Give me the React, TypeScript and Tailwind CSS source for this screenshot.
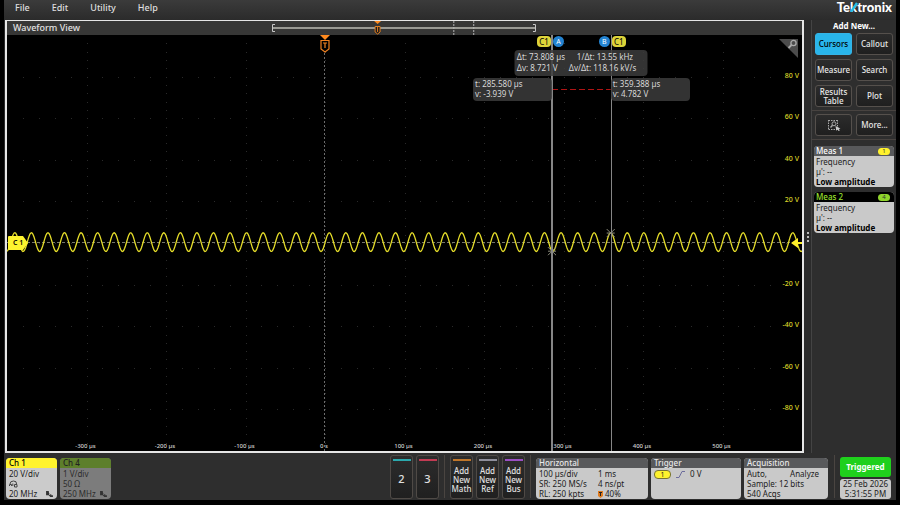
import type { ReactNode } from 'react';
import clsx from 'clsx';

const T_MIN = -400;
const T_SPAN = 1000;
const V_MAX = 100;
const V_SPAN = 200;

const PLOT_W = 795;
const PLOT_H = 416;

const CURSOR_A = { t: 285.58, v: -3.939 };
const CURSOR_B = { t: 359.388, v: 4.782 };

const timeTicks = [-300, -200, -100, 0, 100, 200, 300, 400, 500];
const voltTicks = [80, 60, 40, 20, 0, -20, -40, -60, -80];

const px = (t: number) => ((t - T_MIN) / T_SPAN) * PLOT_W;
const py = (v: number) => ((V_MAX - v) / V_SPAN) * PLOT_H;
const left = (t: number) => `${((t - T_MIN) / T_SPAN) * 100}%`;
const top = (v: number) => `${((V_MAX - v) / V_SPAN) * 100}%`;

/** Sine trace that peaks at cursor B. */
function buildTrace() {
  const period = 20.82;
  const points: string[] = [];
  for (let t = T_MIN; t <= T_MIN + T_SPAN; t += 1) {
    const v = 0.42 + 4.5 * Math.cos((2 * Math.PI * (t - CURSOR_B.t)) / period);
    points.push(`${px(t).toFixed(2)},${py(v).toFixed(2)}`);
  }
  return points.join(' ');
}

const trace = buildTrace();

function GridDots() {
  const dots: ReactNode[] = [];
  for (const t of timeTicks) {
    for (let i = 1; i < 50; i++) {
      dots.push(<rect key={`v${t}-${i}`} x={Math.round(px(t))} y={Math.round((i * PLOT_H) / 50)} width="1" height="1" />);
    }
  }
  for (const v of voltTicks) {
    for (let i = 1; i < 50; i++) {
      dots.push(<rect key={`h${v}-${i}`} x={Math.round((i * PLOT_W) / 50)} y={Math.round(py(v))} width="1" height="1" />);
    }
  }
  return <g fill="#2a2a2a">{dots}</g>;
}

function CursorMark({ t, v }: { t: number; v: number }) {
  const x = px(t);
  const y = py(v);
  return (
    <path
      d={`M${x - 4} ${y - 4}L${x + 4} ${y + 4}M${x + 4} ${y - 4}L${x - 4} ${y + 4}M${x - 4} ${y}H${x + 4}`}
      stroke="#8c8c7c"
      strokeWidth="1"
    />
  );
}

function TriggerMarker({ className }: { className?: string }) {
  return (
    <svg viewBox="0 0 10 18" className={className} fill="none" aria-hidden="true">
      <path d="M0 0H10L5 5Z" fill="#ff8a1e" />
      <path d="M1 5.5H9V14L5 17L1 14Z" fill="#000" stroke="#f08020" strokeWidth="1.2" />
      <path d="M3 8H7M5 8V13" stroke="#f08020" strokeWidth="1.2" />
    </svg>
  );
}

function Overview() {
  return (
    <svg viewBox="0 0 266 14" preserveAspectRatio="none" className="absolute left-1/3 top-0 h-full w-1/3" fill="none" aria-hidden="true">
      <path d="M3 3.5H0.5V10.5H3M262 3.5H264.5V10.5H262" stroke="#c8c8c8" />
      <path d="M1 7H264" stroke="#9a9a94" strokeWidth="2" />
      <path d="M182.5 0V14M202.5 0V14" stroke="#b5b5b5" strokeDasharray="2 1" />
      <path d="M102.5 0H109.5L106 3Z" fill="#ff8a1e" />
      <path d="M103.5 5.5H108.5V11L106 13L103.5 11Z" fill="#1a1a1a" stroke="#e07c20" />
      <path d="M106 6V11" stroke="#e07c20" />
    </svg>
  );
}

function SourceTag() {
  return <span className="h-[11px] w-[14px] rounded-sm bg-[#ddd43a] text-center text-[8px] leading-[11px] text-black">C1</span>;
}

function CursorTag({ name }: { name: string }) {
  return <span className="size-[11px] rounded-full bg-[#2383d1] text-center text-[7px] leading-[11px] text-white">{name}</span>;
}

const readout = 'absolute rounded-sm bg-[#3c3c3c]/85 px-[2px] text-[8px] text-[#d8d8d8] whitespace-nowrap';

function Plot() {
  return (
    <div className="relative min-h-[416px] flex-1 overflow-hidden bg-black">
      <svg
        viewBox={`0 0 ${PLOT_W} ${PLOT_H}`}
        preserveAspectRatio="none"
        className="absolute inset-0 size-full"
        fill="none"
        role="img"
        aria-label="Channel 1"
      >
        <GridDots />
        <path d={`M0 ${py(0) - 0.5}H${PLOT_W}`} stroke="#77776c" strokeDasharray="3 2" strokeWidth="1" />
        <path d={`M${Math.floor(px(0)) - 0.5} 18V${PLOT_H}`} stroke="#6c6c6c" strokeDasharray="2 2" />
        <polyline points={trace} stroke="#e6de2a" strokeWidth="1.3" />
        <path d={`M${px(CURSOR_A.t)} 54.5H${px(CURSOR_B.t)}`} stroke="#b01414" strokeDasharray="6 3" />
        <CursorMark {...CURSOR_A} />
        <CursorMark {...CURSOR_B} />
      </svg>

      <div className="absolute inset-y-0 w-[2px] -translate-x-1/2 bg-[#868686]" style={{ left: left(CURSOR_A.t) }} />
      <div className="absolute inset-y-0 w-px bg-[#868686]" style={{ left: left(CURSOR_B.t) }} />

      <TriggerMarker className="absolute top-0 left-[40%] h-[18px] w-[10px] -translate-x-1/2" />

      <div className={clsx(readout, 'top-[43px] h-[23px] w-[79px] -translate-x-full pt-px leading-[10px]')} style={{ left: left(CURSOR_A.t) }}>
        <p>t: 285.580 µs</p>
        <p>v: -3.939 V</p>
      </div>
      <div className={clsx(readout, 'top-[43px] h-[23px] w-[79px] pt-px leading-[10px]')} style={{ left: left(CURSOR_B.t) }}>
        <p>t: 359.388 µs</p>
        <p>v: 4.782 V</p>
      </div>
      <div
        className={clsx(readout, 'top-[15px] grid h-[26px] w-[133px] -translate-x-1/2 grid-cols-[48px_1fr] content-start gap-x-1 pt-px leading-[11px]')}
        style={{ left: left((CURSOR_A.t + CURSOR_B.t) / 2) }}
      >
        <span>Δt: 73.808 µs</span>
        <span className="pl-2">1/Δt: 13.55 kHz</span>
        <span>Δv: 8.721 V</span>
        <span>Δv/Δt: 118.16 kV/s</span>
      </div>

      <div className="absolute top-px flex w-[30px] -translate-x-1/2 justify-between pr-[3px]" style={{ left: left(CURSOR_A.t) }}>
        <SourceTag />
        <CursorTag name="A" />
      </div>
      <div className="absolute top-px flex w-[30px] -translate-x-1/2 justify-between pl-[3px]" style={{ left: left(CURSOR_B.t) }}>
        <CursorTag name="B" />
        <SourceTag />
      </div>

      <svg viewBox="0 0 19 19" className="absolute top-1 right-1 size-[19px]" fill="none" aria-hidden="true">
        <path d="M0 0H19V19Z" fill="#4c4c4c" />
        <circle cx="14.5" cy="4" r="2.6" stroke="#aaa" strokeWidth="1.3" />
        <path d="M12.5 6L9.5 9" stroke="#aaa" strokeWidth="1.8" />
      </svg>

      {timeTicks.map((t) => (
        <span
          key={t}
          className="absolute bottom-px -translate-x-1/2 pr-[2px] text-[6px] leading-[8px] font-medium whitespace-nowrap text-[#cfcfcf]"
          style={{ left: left(t) }}
        >
          {t === 0 ? '0 s' : `${t} µs`}
        </span>
      ))}

      {voltTicks
        .filter((v) => v !== 0)
        .map((v) => (
          <span key={v} className="absolute right-[3px] -translate-y-1/2 pb-[2px] text-[7px] leading-[8px] font-medium text-[#ddd628]" style={{ top: top(v) }}>
            {v} V
          </span>
        ))}

      <svg viewBox="0 0 12 10" className="absolute right-0 h-[10px] w-[12px] -translate-y-1/2" style={{ top: top(0) }} aria-hidden="true">
        <path d="M1 5L8 0V4H12V6H8V10Z" fill="#fff02a" />
      </svg>
      <div className="absolute left-[1px] flex h-[14px] -translate-y-1/2 items-center" style={{ top: top(0) }}>
        <svg viewBox="0 0 20 14" className="absolute inset-0 h-[14px] w-[20px]" aria-hidden="true">
          <path d="M1 0H15L20 7L15 14H1Q0 14 0 13V1Q0 0 1 0Z" fill="#fdf32f" />
        </svg>
        <span className="relative pl-[5px] text-[7px] font-semibold text-black">C 1</span>
      </div>
    </div>
  );
}

function PanelButton({ children, active, label }: { children: ReactNode; active?: boolean; label?: string }) {
  return (
    <button
      type="button"
      aria-label={label}
      className={clsx(
        'flex h-[22px] items-center justify-center rounded-[3px] border pb-px text-center text-[8px] leading-[9px] font-medium',
        active ? 'border-[#35b4e6] bg-[#29b5ea] text-black' : 'border-[#55504c] bg-linear-to-b from-[#2c2c2c] to-[#1f1f1f] text-[#e8e8e8]',
      )}
    >
      {children}
    </button>
  );
}

function Measurement({ name, channel, green }: { name: string; channel: number; green?: boolean }) {
  return (
    <section className="overflow-hidden rounded-sm bg-[#c9c9c9] text-[8px] leading-[10px] text-[#222]">
      <header className={clsx('flex h-[10px] items-center justify-between pr-1 pl-[2px]', green ? 'bg-black text-[#9be02e]' : 'bg-[#58595b] text-white')}>
        <h2 className="font-medium">{name}</h2>
        <span className={clsx('h-[7px] w-3 rounded-sm text-center text-[6px] leading-[7px] text-[#333]', green ? 'bg-[#8fd42c]' : 'bg-[#fff22d]')}>
          {channel}
        </span>
      </header>
      <div className="px-[2px] pt-px">
        <p>Frequency</p>
        <p>µ': --</p>
        <p className="font-bold text-black">Low amplitude</p>
      </div>
    </section>
  );
}

function Sidebar() {
  return (
    <aside className="w-[85px] shrink-0 border-l border-[#444] bg-[#2e2e2e]">
      <h1 className="text-center text-[8px] leading-[11px] font-bold text-white">Add New...</h1>
      <div className="grid grid-cols-2 gap-1 px-[3px] pt-[2px]">
        <PanelButton active>Cursors</PanelButton>
        <PanelButton>Callout</PanelButton>
        <PanelButton>Measure</PanelButton>
        <PanelButton>Search</PanelButton>
        <PanelButton>
          Results
          <br />
          Table
        </PanelButton>
        <PanelButton>Plot</PanelButton>
      </div>
      <div className="mt-[3px] grid grid-cols-2 gap-x-1 border-y border-[#484340] px-[3px] py-[3px]">
        <PanelButton label="Draw a box">
          <svg viewBox="0 0 14 12" className="h-3 w-[14px]" fill="none" stroke="#aaa" aria-hidden="true">
            <path d="M1.5 1.5H11M1.5 10.5H11M1.5 1V11M10.5 1V8" strokeDasharray="1.5 1" />
            <circle cx="7" cy="4.8" r="2" />
            <path d="M5.5 6.3L3.5 8.5" strokeWidth="1.4" />
            <path d="M8.5 7L13.5 9.5L11.8 10L12.8 11.5L11.6 12L10.6 10.6L9.3 11.8Z" fill="#ccc" stroke="none" />
          </svg>
        </PanelButton>
        <PanelButton>More...</PanelButton>
      </div>
      <div className="flex flex-col gap-[5px] px-[2px] pt-[6px]">
        <Measurement name="Meas 1" channel={1} />
        <Measurement name="Meas 2" channel={4} green />
      </div>
    </aside>
  );
}

function BandwidthIcon() {
  return (
    <svg viewBox="0 0 8 7" className="h-[6px] w-[7px]" aria-hidden="true">
      <path d="M0 0H2.5Q4 .3 3.3 1.9Q4.6 2.8 3.4 4L5 5V3.5H6V5H8V7H5L3 5H0Z" fill="#333" />
    </svg>
  );
}

interface ChannelProps {
  name: string;
  scale: string;
  termination: ReactNode;
  bandwidth: string;
  dim?: boolean;
}

function Channel({ name, scale, termination, bandwidth, dim }: ChannelProps) {
  return (
    <section className={clsx('h-[41px] w-[51px] overflow-hidden rounded-sm text-[8px]', dim ? 'bg-[#7c7c7c] text-[#2c2c2c]' : 'bg-[#cbcbcb] text-[#222]')}>
      <h2 className={clsx('h-[10px] pl-[3px] leading-[10px] font-medium', dim ? 'bg-[#5d7f2b] text-[#222]' : 'bg-[#fff32d] text-black')}>{name}</h2>
      <div className="pt-px pr-1 pl-[3px] leading-[10px]">
        <p>{scale}</p>
        <p className="flex h-[10px] items-center">{termination}</p>
        <p className="flex items-center justify-between">
          {bandwidth}
          <BandwidthIcon />
        </p>
      </div>
    </section>
  );
}

function AddButton({ color, children, large }: { color: string; children: ReactNode; large?: boolean }) {
  return (
    <button
      type="button"
      className={clsx(
        'flex h-[44px] w-[23px] flex-col items-center rounded-[3px] border border-[#4f4a46] bg-linear-to-b from-[#2c2c2c] to-[#202020] pt-[3px] font-medium text-[#e0e0e0]',
        large ? 'text-[11px]' : 'text-[8px] leading-[9px]',
      )}
    >
      <span className={clsx('h-[2px] w-[18px] shrink-0', color)} />
      <span className="flex flex-1 flex-col items-center justify-center">{children}</span>
    </button>
  );
}

function Tile({ title, className, children }: { title: string; className?: string; children: ReactNode }) {
  return (
    <section className={clsx('h-[41px] overflow-hidden rounded-sm bg-[#c9c9c9] text-[8px] leading-[10px] text-[#1c1c1c]', className)}>
      <h2 className="h-[10px] bg-[#58595b] pl-[3px] font-medium text-[#e8e8e8]">{title}</h2>
      <div className="pt-px pl-[3px]">{children}</div>
    </section>
  );
}

function Divider() {
  return <div className="mb-px w-px self-stretch bg-[#4a4541]" />;
}

function BottomBar() {
  return (
    <footer className="flex h-[47px] shrink-0 items-end gap-[5px] bg-[#2e2e2e] pt-[2px] pr-[5px] pb-px pl-[2px]">
      <div className="flex gap-[3px]">
        <Channel
          name="Ch 1"
          scale="20 V/div"
          bandwidth="20 MHz"
          termination={
            <svg viewBox="0 0 9 8" className="h-2 w-[9px]" fill="none" stroke="#444" aria-hidden="true">
              <path d="M1 4Q1 1 4.5 1T7.5 4M.5 6V4.5H2.5V6M3.8 3.5V6M5.5 7V4.5H8V7Z" />
            </svg>
          }
        />
        <Channel name="Ch 4" scale="1 V/div" bandwidth="250 MHz" termination="50 Ω" dim />
      </div>

      <div className="ml-auto flex gap-[3px]">
        <AddButton color="bg-[#2ba9ad]" large>2</AddButton>
        <AddButton color="bg-[#c23b53]" large>3</AddButton>
      </div>
      <Divider />
      <div className="flex gap-[3px]">
        <AddButton color="bg-[#c0762a]">
          <span>Add</span>
          <span>New</span>
          <span>Math</span>
        </AddButton>
        <AddButton color="bg-[#8f8f9c]">
          <span>Add</span>
          <span>New</span>
          <span>Ref</span>
        </AddButton>
        <AddButton color="bg-[#9a4fc4]">
          <span>Add</span>
          <span>New</span>
          <span>Bus</span>
        </AddButton>
      </div>
      <Divider />

      <div className="flex gap-[3px] pr-px">
        <Tile title="Horizontal" className="w-[112px]">
          <div className="grid grid-cols-[59px_1fr]">
            <span>100 µs/div</span>
            <span>1 ms</span>
            <span>SR: 250 MS/s</span>
            <span>4 ns/pt</span>
            <span>RL: 250 kpts</span>
            <span className="flex items-center gap-[2px]">
              <svg viewBox="0 0 5 7" className="h-[7px] w-[5px]" aria-hidden="true">
                <path d="M0 0H5V5L2.5 7L0 5Z" fill="#e07c20" />
                <path d="M1 1.5H4M2.5 1.5V5" stroke="#222" />
              </svg>
              40%
            </span>
          </div>
        </Tile>
        <Tile title="Trigger" className="w-[90px]">
          <div className="flex items-center gap-[5px]">
            <span className="h-[9px] w-[17px] rounded-sm border border-[#777333] bg-[#fff22d] text-center text-[7px] leading-[7px]">1</span>
            <svg viewBox="0 0 9 7" className="h-[7px] w-[9px]" fill="none" stroke="#6d6d9c" aria-hidden="true">
              <path d="M0 6.5H3L6 .5H9" />
            </svg>
            <span>0 V</span>
          </div>
        </Tile>
        <Tile title="Acquisition" className="w-[84px]">
          <p className="flex justify-between pr-[9px]">
            <span>Auto,</span>
            <span>Analyze</span>
          </p>
          <p>Sample: 12 bits</p>
          <p>540 Acqs</p>
        </Tile>
      </div>
      <Divider />
      <div className="flex w-[51px] flex-col gap-[2px] text-center text-[8px]">
        <button type="button" className="h-5 rounded-[3px] bg-[#1fd01c] pb-px font-bold text-white">Triggered</button>
        <div className="rounded-[3px] bg-[#c9c9c9] leading-[10px] text-[#222]">
          <p>25 Feb 2026</p>
          <p>5:31:55 PM</p>
        </div>
      </div>
    </footer>
  );
}

function MenuBar() {
  return (
    <header className="flex h-[20px] shrink-0 items-start justify-between bg-linear-to-b from-[#3b3b3b] to-[#2b2b2b] pr-[4px] pl-[11px]">
      <nav className="flex gap-[22px] pt-px text-[9px] leading-[13px] font-medium text-[#dedede]">
        <button type="button">File</button>
        <button type="button">Edit</button>
        <button type="button">Utility</button>
        <button type="button">Help</button>
      </nav>
      <div className="font-[Lato,sans-serif] text-[13px] leading-[14px] font-black text-white">
        Te
        <span className="relative">
          k
          <svg viewBox="0 0 8 10" className="absolute top-[3px] left-0 h-[10px] w-2" fill="none" aria-hidden="true">
            <path d="M1 10L7 1" stroke="#25bfe8" strokeWidth="2.4" />
          </svg>
        </span>
        tronix
      </div>
    </header>
  );
}

export default function App() {
  return (
    <div className="flex min-h-screen w-full flex-col bg-black px-1 pb-[5px] font-['Noto_Sans',sans-serif]">
      <MenuBar />
      <div className="flex flex-1 bg-[#2b2b2b] pl-px">
        <main className="flex flex-1 flex-col border-2 border-t-1 border-[#e6e6e6]">
          <div className="relative h-[14px] shrink-0 bg-[#373736] pl-[6px] text-[9px] leading-[13px] font-medium text-[#e2e2e2]">
            Waveform View
            <Overview />
          </div>
          <Plot />
        </main>
        <div className="flex w-[7px] shrink-0 flex-col items-center gap-[2px] pt-[212px]">
          <i className="size-[2px] bg-[#bbb]" />
          <i className="size-[2px] bg-[#bbb]" />
          <i className="size-[2px] bg-[#bbb]" />
        </div>
        <Sidebar />
      </div>
      <BottomBar />
    </div>
  );
}
